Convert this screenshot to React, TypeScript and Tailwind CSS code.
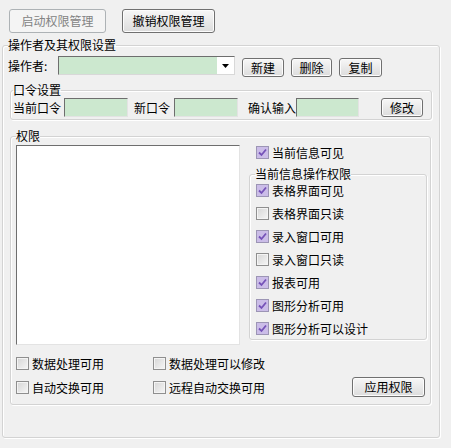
import React from "react";

function Btn({ label, w, disabled = false, className = "" }: { label: string; w: string; disabled?: boolean; className?: string }) {
  return (
    <div
      className={`${w} ${className} flex items-center justify-center rounded-[3px] border ${
        disabled
          ? "border-[#adb2b5] bg-[#f4f4f4] text-[#838383]"
          : "border-[#707070] bg-gradient-to-b from-[#f7f7f7] to-[#dcdcdc] text-black shadow-[inset_0_0_0_1px_#fcfcfc]"
      }`}
    >
      {label}
    </div>
  );
}

function Field({ w }: { w: string }) {
  return (
    <div
      className={`${w} h-[19px] border border-t-[#6e6e6e] border-l-[#6e6e6e] border-r-[#e3e3e3] border-b-[#e3e3e3] bg-[#cce8cf]`}
    />
  );
}

function Check({ label, checked = false }: { label: string; checked?: boolean }) {
  return (
    <div className="flex h-[13px] items-center gap-[3px]">
      {checked ? (
        <span className="flex h-[13px] w-[13px] items-center justify-center border border-[#9c95b5] bg-[#cbbde8]">
          <svg width="9" height="9" viewBox="0 0 9 9">
            <path d="M1 4.5 L3.5 7 L8 1.5" fill="none" stroke="#7552b8" strokeWidth="1.8" />
          </svg>
        </span>
      ) : (
        <span className="h-[13px] w-[13px] border border-[#8f8f8f] bg-gradient-to-br from-[#d6d6d6] to-[#f6f6f6] shadow-[inset_0_0_0_1px_#f4f4f4]" />
      )}
      <span>{label}</span>
    </div>
  );
}

export default function App() {
  return (
    <div className="h-[448px] w-[451px] overflow-hidden bg-[#f0f0f0] font-['Noto_Sans_CJK_SC',sans-serif] text-[12px] leading-none text-black">
      {/* 顶部按钮 */}
      <div className="flex gap-[16px] pl-[9px] pt-[9px]">
        <Btn label="启动权限管理" w="w-[97px] h-[24px]" disabled />
        <Btn label="撤销权限管理" w="w-[93px] h-[24px]" />
      </div>

      {/* 操作者及其权限设置 */}
      <fieldset className="ml-[2px] mt-[6px] h-[399px] w-[438px] rounded-[3px] border border-[#d3d3d3] shadow-[inset_1px_1px_0_#fff,1px_1px_0_#fff]">
        <legend className="ml-[5px] h-[12px]">操作者及其权限设置</legend>

        <div className="mt-[5px] flex h-[21px] items-start pl-[5px]">
          <span className="mt-[4px] w-[50px]">操作者:</span>
          <div className="flex h-[19px] w-[177px] border border-t-[#6e6e6e] border-l-[#6e6e6e] border-r-[#d8d8d8] border-b-[#d8d8d8] bg-[#cce8cf]">
            <div className="flex-1" />
            <div className="flex w-[17px] items-center justify-center bg-white">
              <svg width="7" height="4" viewBox="0 0 7 4">
                <path d="M0 0 H7 L3.5 4 Z" fill="#000" />
              </svg>
            </div>
          </div>
          <Btn label="新建" w="ml-[7px] mt-[2px] w-[42px] h-[19px]" />
          <Btn label="删除" w="ml-[7px] mt-[2px] w-[41px] h-[19px]" />
          <Btn label="复制" w="ml-[7px] mt-[2px] w-[43px] h-[19px]" />
        </div>

        {/* 口令设置 */}
        <fieldset className="ml-[7px] mt-[7px] h-[36px] w-[422px] rounded-[3px] border border-[#d3d3d3] shadow-[inset_1px_1px_0_#fff,1px_1px_0_#fff]">
          <legend className="ml-[2px] h-[12px]">口令设置</legend>
          <div className="mt-[2px] flex h-[19px] items-center pl-[2px]">
            <span className="w-[51px]">当前口令</span>
            <Field w="w-[64px]" />
            <span className="ml-[6px] w-[40px]">新口令</span>
            <Field w="w-[64px]" />
            <span className="ml-[10px] w-[48px]">确认输入</span>
            <Field w="w-[63px]" />
            <Btn label="修改" w="ml-[22px] w-[42px] h-[19px]" />
          </div>
        </fieldset>

        {/* 权限 */}
        <fieldset className="ml-[7px] mt-[10px] h-[275px] w-[421px] rounded-[3px] border border-[#d3d3d3] shadow-[inset_1px_1px_0_#fff,1px_1px_0_#fff]">
          <legend className="ml-[5px] h-[12px]">权限</legend>
          <div className="mt-[3px] flex pl-[5px]">
            <div className="h-[200px] w-[224px] border border-t-[#6e6e6e] border-l-[#6e6e6e] border-r-[#e3e3e3] border-b-[#e3e3e3] bg-white" />
            <div className="ml-[9px] w-[178px]">
              <div className="mt-[1px] pl-[7px]">
                <Check label="当前信息可见" checked />
              </div>
              <fieldset className="mt-[9px] h-[172px] w-[178px] rounded-[3px] border border-[#d3d3d3] shadow-[inset_1px_1px_0_#fff,1px_1px_0_#fff]">
                <legend className="ml-[5px] h-[12px]">当前信息操作权限</legend>
                <div className="mt-[4px] flex flex-col gap-[10px] pl-[6px]">
                  <Check label="表格界面可见" checked />
                  <Check label="表格界面只读" />
                  <Check label="录入窗口可用" checked />
                  <Check label="录入窗口只读" />
                  <Check label="报表可用" checked />
                  <Check label="图形分析可用" checked />
                  <Check label="图形分析可以设计" checked />
                </div>
              </fieldset>
            </div>
          </div>

          <div className="mt-[12px] flex items-start pl-[5px] pr-[5px]">
            <div className="grid grid-cols-[137px_auto] gap-y-[11px]">
              <Check label="数据处理可用" />
              <Check label="数据处理可以修改" />
              <Check label="自动交换可用" />
              <Check label="远程自动交换可用" />
            </div>
            <Btn label="应用权限" w="ml-auto mt-[20px] w-[73px] h-[20px]" />
          </div>
        </fieldset>
      </fieldset>
    </div>
  );
}
